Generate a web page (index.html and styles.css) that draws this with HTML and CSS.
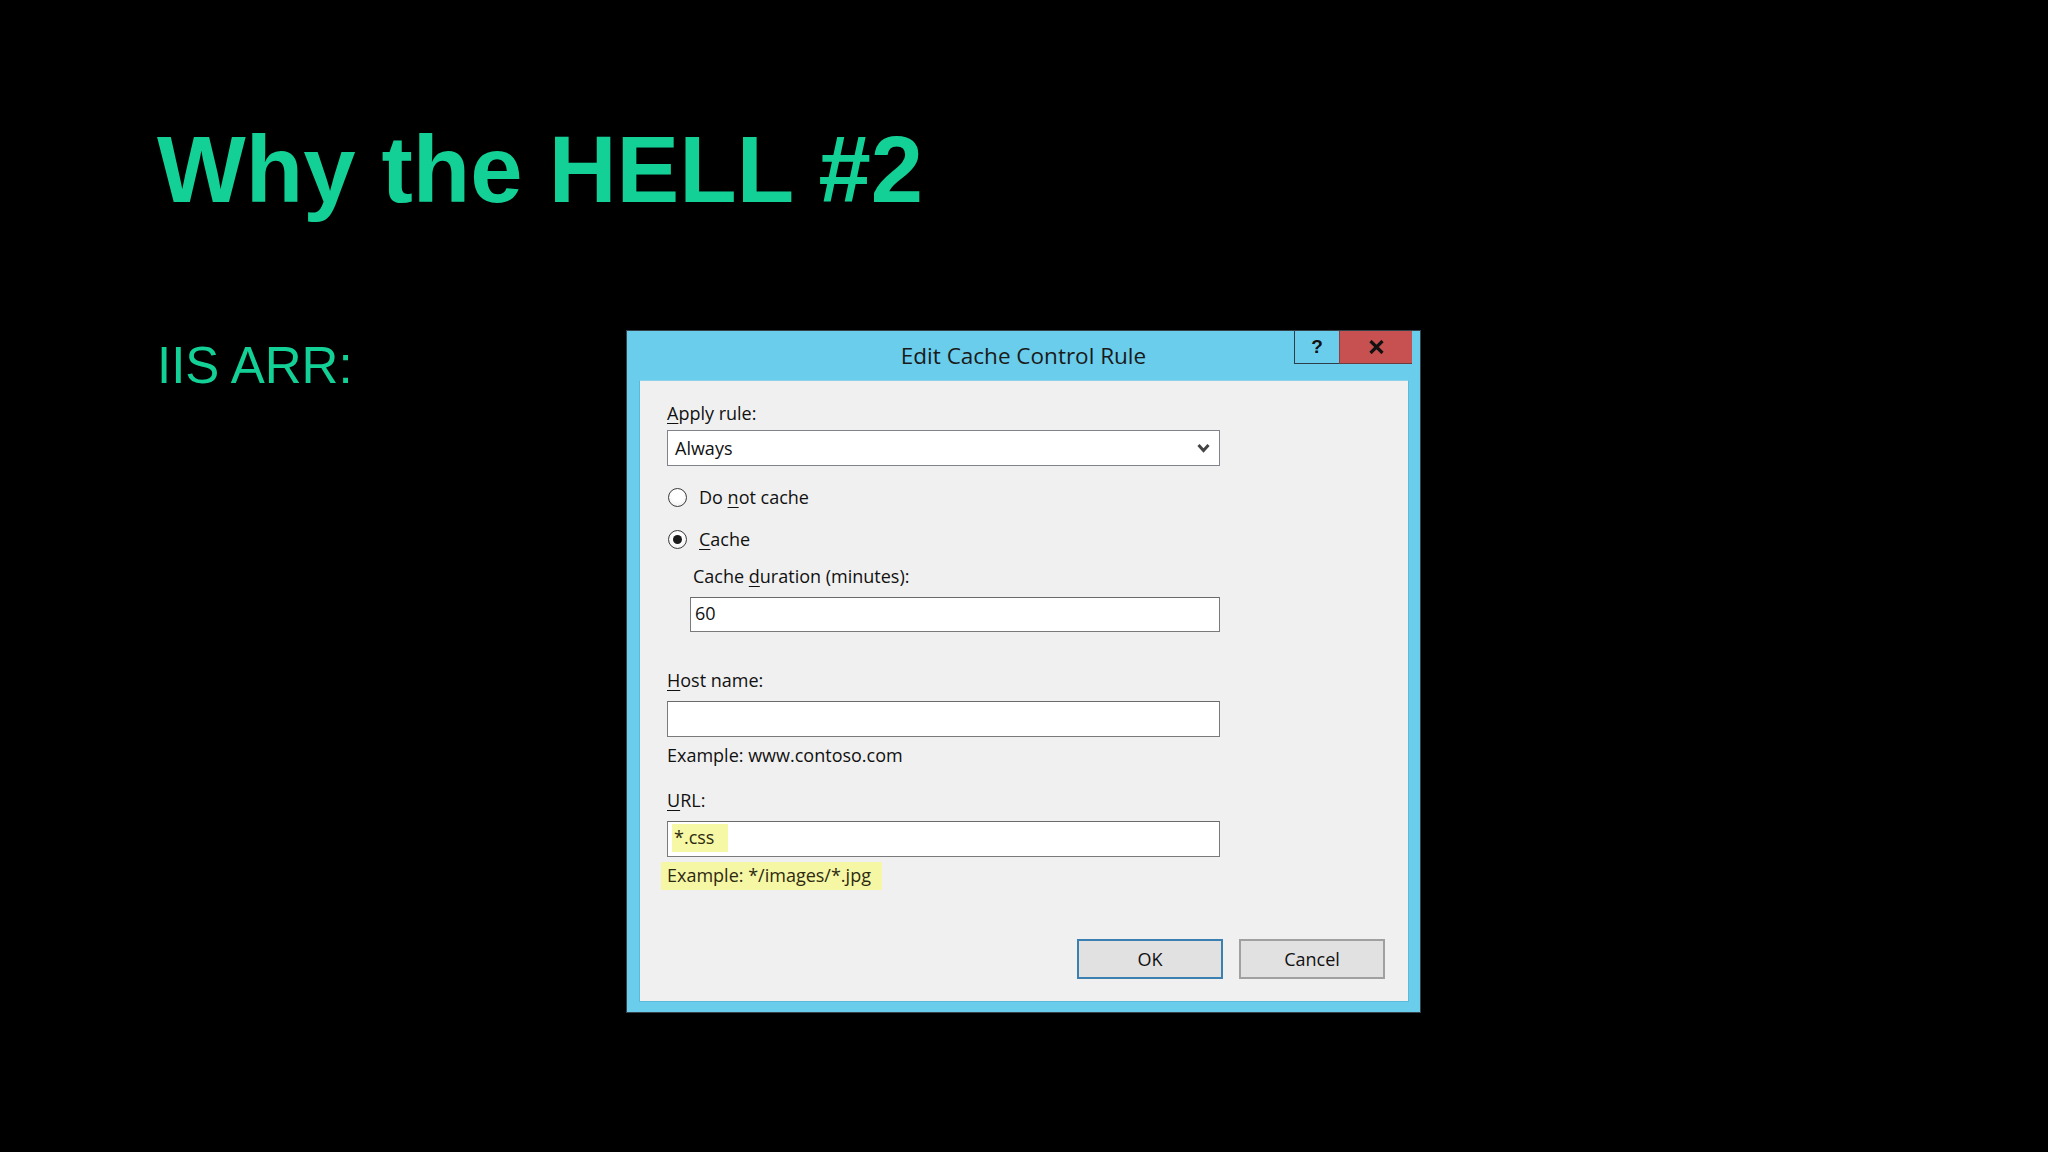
FILE: index.html
```html
<!DOCTYPE html>
<html>
<head>
<meta charset="utf-8">
<link rel="stylesheet" href="styles.css">
</head>
<body>
<div class="slide">
  <h1 class="title">Why the HELL #2</h1>
  <div class="row">
    <div class="bullet">IIS ARR:</div>
    <div class="dialog">
      <div class="titlebar">Edit Cache Control Rule</div>
      <div class="caption-btns">
        <div class="cap help">?</div>
        <div class="cap close">
          <svg width="15" height="14" viewBox="0 0 15 14"><path d="M1.5 1 L13.5 13 M13.5 1 L1.5 13" stroke="#111" stroke-width="3.2" fill="none"/></svg>
        </div>
      </div>
      <div class="client">
        <div class="line"><u>A</u>pply rule:</div>
        <div class="select">
          <span>Always</span>
          <svg class="chev" width="13" height="10" viewBox="0 0 13 10"><path d="M1.5 2 L6.5 7.5 L11.5 2" stroke="#444" stroke-width="3" fill="none"/></svg>
        </div>
        <div class="radio-row r1"><span class="radio"></span><span class="line">Do <u>n</u>ot cache</span></div>
        <div class="radio-row r2"><span class="radio checked"></span><span class="line"><u>C</u>ache</span></div>
        <div class="indent">
          <div class="line dur">Cache <u>d</u>uration (minutes):</div>
          <div class="input short">60</div>
        </div>
        <div class="line host"><u>H</u>ost name:</div>
        <div class="input"></div>
        <div class="line ex">Example: www.contoso.com</div>
        <div class="line url"><u>U</u>RL:</div>
        <div class="input"><span class="hl-in">*.css</span></div>
        <div class="line ex2"><span class="hl">Example: */images/*.jpg</span></div>
        <div class="buttons">
          <div class="btn ok">OK</div>
          <div class="btn cancel">Cancel</div>
        </div>
      </div>
    </div>
  </div>
</div>
</body>
</html>
```
FILE: styles.css
```css
html, body {
  margin: 0;
  padding: 0;
  background: #000;
  width: 2048px;
  height: 1152px;
  overflow: hidden;
}
.slide {
  padding: 123px 0 0 157px;
  font-family: "Liberation Sans", Arial, sans-serif;
}
.title {
  margin: 0;
  font-size: 94px;
  line-height: 93px;
  font-weight: bold;
  color: #13d196;
}
.row {
  display: flex;
  margin-top: 114px;
}
.bullet {
  width: 469px;
  flex-shrink: 0;
  margin-top: 10px;
  font-size: 51px;
  line-height: 51px;
  color: #13d196;
}
.dialog {
  position: relative;
  width: 795px;
  height: 683px;
  box-sizing: border-box;
  border: 1px solid #36424a;
  background: #69cdeb;
  display: flex;
  flex-direction: column;
  font-family: "Open Sans", "Noto Sans", sans-serif;
  color: #111;
}
.titlebar {
  height: 49px;
  line-height: 49px;
  text-align: center;
  font-size: 22.5px;
  color: #1a1a1a;
}
.caption-btns {
  position: absolute;
  top: 0;
  right: 8px;
  display: flex;
}
.cap {
  height: 33px;
  box-sizing: border-box;
  display: flex;
  align-items: center;
  justify-content: center;
}
.help {
  width: 45px;
  border-left: 1px solid #2e3e48;
  border-bottom: 1px solid #2e3e48;
  font-family: "Liberation Sans", Arial, sans-serif;
  font-weight: bold;
  font-size: 19px;
  color: #111;
}
.close {
  width: 73px;
  background: #c75050;
  border-bottom: 1px solid #6e3a3a;
  border-left: 1px solid #8a4040;
}
.client {
  flex: 1;
  margin: 0 11px 10px 12px;
  background: #f0f0f0;
  border: 1px solid #5cbad9;
  border-top-color: #8fd3ea;
  padding: 20px 23px 0 27px;
  font-size: 18px;
}
.line {
  line-height: 24px;
  height: 24px;
  white-space: nowrap;
}
u {
  text-decoration-thickness: 1px;
  text-underline-offset: 3px;
}
.select {
  margin-top: 5px;
  width: 553px;
  height: 36px;
  box-sizing: border-box;
  border: 1px solid #80848a;
  background: #fff;
  padding: 5px 0 0 7px;
  line-height: 24px;
  display: flex;
  justify-content: space-between;
}
.chev {
  margin: 7px 9px 0 0;
}
.radio-row {
  display: flex;
  align-items: center;
  height: 24px;
}
.r1 { margin-top: 19px; }
.r2 { margin-top: 18px; }
.radio {
  width: 19px;
  height: 19px;
  box-sizing: border-box;
  border: 1px solid #3c3c3c;
  border-radius: 50%;
  background: radial-gradient(circle at 50% 40%, #ffffff 40%, #e8e8e8 100%);
  margin: 0 12px 0 1px;
  display: flex;
  align-items: center;
  justify-content: center;
}
.radio.checked::after {
  content: "";
  width: 9px;
  height: 9px;
  border-radius: 50%;
  background: #1a1a1a;
}
.indent {
  margin-top: 13px;
  padding-left: 23px;
}
.dur { padding-left: 3px; }
.input {
  margin-top: 9px;
  width: 553px;
  height: 36px;
  box-sizing: border-box;
  border: 1px solid #7a7a7a;
  border-top-color: #6a6a6a;
  background: #fff;
  padding: 3px 0 0 4px;
  line-height: 24px;
}
.input.short {
  width: 530px;
  height: 35px;
  padding-top: 3px;
}
.host { margin-top: 36px; }
.ex { margin-top: 6px; }
.url { margin-top: 21px; }
.hl-in {
  display: inline-block;
  background: #f7f8a6;
  height: 28px;
  line-height: 26px;
  margin-top: -1px;
  padding: 0 14px 0 2px;
  color: #2c2a10;
}
.ex2 { margin-top: 5px; }
.hl {
  display: inline-block;
  background: #f5f7a4;
  margin-left: -6px;
  padding: 1px 11px 3px 6px;
  line-height: 24px;
  color: #2e2a12;
}
.buttons {
  margin-top: 53px;
  display: flex;
  justify-content: flex-end;
  gap: 16px;
}
.btn {
  width: 146px;
  height: 40px;
  box-sizing: border-box;
  background: #e1e1e1;
  display: flex;
  align-items: center;
  justify-content: center;
  font-size: 18px;
}
.ok { border: 2px solid #3c7fb1; }
.cancel { border: 2px solid #a0a0a0; }
```
